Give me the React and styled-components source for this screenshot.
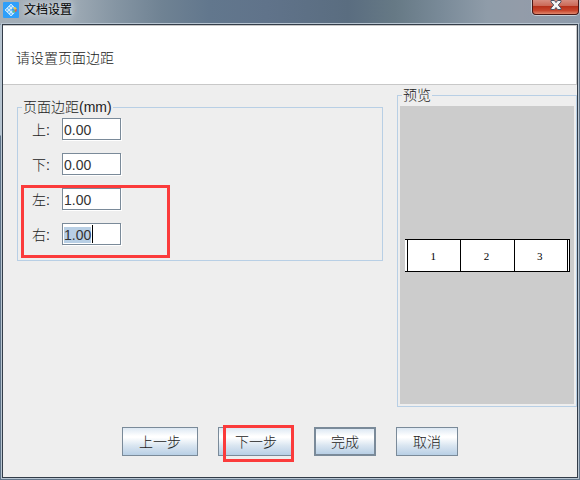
import React, { useEffect, useRef } from "react";
import styled, { createGlobalStyle } from "styled-components";

const margins = [
    { id: "top", label: "上:", value: "0.00" },
    { id: "bottom", label: "下:", value: "0.00" },
]
const sideMargins = [
    { id: "left", label: "左:", value: "1.00" },
    { id: "right", label: "右:", value: "1.00", active: true },
]

function MarginField({ id, label, value, active }) {
    const ref = useRef(null)
    useEffect(() => {
        if (active) {
            ref.current.focus()
            ref.current.select()
        }
    }, [active])
    return <Row>
        <RowLabel htmlFor={id}>{label}</RowLabel>
        <InputBox>
            <RowInput id={id} ref={ref} type="text" defaultValue={value} />
            {active && <Caret />}
        </InputBox>
    </Row>
}

function App() {
    return <>
        <GlobalStyle />
        <Window>
            <TitleBar>
                <Logo />
                <Title>文档设置</Title>
                <CloseBtn aria-label="关闭">
                    <svg width="12" height="11" viewBox="0 0 12 11">
                        <path
                            d="M1 .5h3.400L6 2.600 7.600 .5H11v1.400L8.300 5 11 8.200v1.300H7.600L6 7.500 4.400 9.500H1V8.200l2.700-3.200L1 1.900z"
                            fill="#f4f4f6"
                            stroke="#4b5266"
                            strokeWidth="1"
                        />
                    </svg>
                </CloseBtn>
            </TitleBar>
            <Content>
                <Banner>请设置页面边距</Banner>
                <Main>
                    <MarginGroup>
                        <Legend>页面边距(mm)</Legend>
                        <Rows>
                            {margins.map((m) => <MarginField key={m.id} {...m} />)}
                            <Marked>
                                {sideMargins.map((m) => <MarginField key={m.id} {...m} />)}
                                <RowsMark />
                            </Marked>
                        </Rows>
                    </MarginGroup>
                    <PreviewGroup>
                        <Legend>预览</Legend>
                        <PreviewArea>
                            <Strip>
                                <StripEdge />
                                <StripCell>1</StripCell>
                                <StripCell>2</StripCell>
                                <StripCell>3</StripCell>
                                <StripEdge $end />
                            </Strip>
                        </PreviewArea>
                    </PreviewGroup>
                </Main>
                <Footer>
                    <FooterBtn $wide>上一步</FooterBtn>
                    <BtnHolder>
                        <FooterBtn $wide>下一步</FooterBtn>
                        <BtnMark />
                    </BtnHolder>
                    <FooterBtn $default>完成</FooterBtn>
                    <FooterBtn>取消</FooterBtn>
                </Footer>
            </Content>
        </Window>
    </>
}

function Logo() {
    return <LogoSvg width="16" height="16" viewBox="0 0 16 16">
        <rect width="16" height="16" rx="1" fill="#2f9ffa" />
        <path d="M8 2 12 6 9 9 11.500 11 8.500 14 2 8z" fill="#7cc4fb" />
        <g fill="none" stroke="#dff2ff" strokeWidth="0.800">
            <path d="M8 2 12 6 8 10M8 2 2 8 8 14 11.500 10.500" />
            <path d="M6 4 10 8M4 6 10 12M10 4 4 10M8 10 6 12" />
        </g>
        <path d="M8.500 7.500 10 6 11.500 7.500 10 9.500z" fill="#2f9ffa" />
        <path d="M10.200 6.500 12 4.800 13.800 6.800 12 8z" fill="#f5c83a" />
        <path d="M11.500 8 14 7 13.500 9.500 12 10z" fill="#ea5a48" />
        <path d="M9.500 8.500 12 8.800 11.500 11 10 10.500z" fill="#6cc873" />
    </LogoSvg>
}

export default App

const GlobalStyle = createGlobalStyle`
    * {
        box-sizing: border-box;
    }
    body {
        margin: 0;
        font-family: "Liberation Sans", "Noto Sans CJK SC", sans-serif;
        font-size: 14px;
        font-weight: 300;
        line-height: 16px;
        color: #222;
    }
    button, input {
        font: inherit;
        color: inherit;
    }
`
const Window = styled.div`
    display: flex;
    flex-direction: column;
    min-height: 100vh;
    padding: 0 1px 1px;
    background:
        linear-gradient(to bottom, transparent 24px, #b5c3cf 25px, #b5c3cf 135px, #5f7388 136px) left / 2px 100% no-repeat,
        linear-gradient(to right, #a4aeb7 0%, #a0acb6 12%, #8595a3 20%, #6f8293 28%, #62778d 36%, #60738a 46%, #5a6d80 60%, #667985 68%, #798a98 76%, #8f9ca9 84%, #939ca9 90%, #8d9bab 100%) top / 100% 24px no-repeat,
        #64788c;
`
const TitleBar = styled.div`
    display: flex;
    align-items: flex-start;
    height: 23px;
    padding-left: 2px;
`
const LogoSvg = styled.svg`
    margin-top: 2px;
`
const Title = styled.span`
    flex: 1;
    padding: 2px 5px;
    font-size: 12px;
    font-weight: 400;
    color: #000;
    text-shadow: 0 0 6px #dfe5ea, 0 0 10px #dfe5ea;
`
const CloseBtn = styled.button`
    display: flex;
    justify-content: center;
    width: 47px;
    height: 15px;
    padding: 0;
    border: 1px solid #4a1714;
    border-top: 0;
    border-radius: 0 0 4px 4px;
    background: linear-gradient(#d78d80, #cb6a58 40%, #b5301a 45%, #c8452c 75%, #e0866c);
    box-shadow: 0 0 0 1px #c5ccd4;
`
const Content = styled.div`
    display: flex;
    flex: 1;
    flex-direction: column;
    margin: 1px;
    border: 1px solid #333d49;
    box-shadow: 0 0 0 1px #b9c6d2;
    background: #eee;
`
const Banner = styled.div`
    padding: 24px 13px 18px;
    border-top: 1px solid #c8c8c8;
    border-bottom: 1px solid #c8c8c8;
    border-right: 1px solid #c8c8c8;
    background: #fff;
`
const Main = styled.div`
    display: flex;
    flex: 1;
    gap: 14px;
    padding: 2px 0 0 14px;
`
const Group = styled.fieldset`
    min-width: 0;
    margin: 0;
    border: 1px solid #b8cfe5;
`
const MarginGroup = styled(Group)`
    flex: 1;
    align-self: flex-start;
    margin-top: 12px;
    padding: 3px 14px 15px;
`
const PreviewGroup = styled(Group)`
    display: flex;
    flex-direction: column;
    flex: 0 0 180px;
    padding: 3px 2px 2px;
`
const Legend = styled.legend`
    margin-left: -10px;
    padding: 0 1px;
    height: 16px;
    ${PreviewGroup} & {
        margin-left: 2px;
    }
`
const Rows = styled.div`
    display: flex;
    flex-direction: column;
    gap: 13px;
`
const Row = styled.div`
    display: flex;
    align-items: center;
`
const RowLabel = styled.label`
    width: 30px;
    padding-top: 2px;
`
const InputBox = styled.div`
    position: relative;
    display: flex;
`
const RowInput = styled.input`
    width: 59px;
    height: 22px;
    padding: 2px 1px 0;
    border: 1px solid #7a8a99;
    border-radius: 0;
    outline: none;
    background: #fff;
    box-shadow: 1px 1px 0 #fff;
    color: #333;
    line-height: 18px;
    &::selection {
        background: #b8cfe5;
        color: #333;
    }
`
const Caret = styled.span`
    position: absolute;
    top: 2px;
    left: 30px;
    width: 1px;
    height: 18px;
    background: #000;
`
const Marked = styled(Rows)`
    position: relative;
`
const RedMark = styled.span`
    position: absolute;
    border: 3px solid #fb3b3b;
    pointer-events: none;
`
const RowsMark = styled(RedMark)`
    top: -3px;
    bottom: -13px;
    left: -11px;
    width: 149px;
`
const BtnMark = styled(RedMark)`
    top: -2px;
    bottom: -6px;
    left: 5px;
    right: 0;
`
const PreviewArea = styled.div`
    display: flex;
    flex: 1;
    align-items: center;
    padding: 0 4px 0 5px;
    background: #ccc;
`
const Strip = styled.div`
    display: flex;
    flex: 1;
    height: 33px;
    border-top: 1px solid #000;
    border-bottom: 1px solid #000;
    background: #fff;
`
const StripEdge = styled.div`
    width: ${(p) => (p.$end ? "3px" : "2px")};
    border: solid #000;
    border-width: ${(p) => (p.$end ? "0 1px" : "0")};
`
const StripCell = styled.div`
    display: flex;
    flex: 1;
    align-items: center;
    justify-content: center;
    padding: 2px 2px 0 0;
    border-left: 1px solid #000;
    font-family: "Liberation Serif", serif;
    font-size: 11px;
    font-weight: 400;
    color: #000;
`
const Footer = styled.div`
    display: flex;
    justify-content: center;
    gap: 20px;
    padding: 20px 0 21px;
`
const BtnHolder = styled.div`
    position: relative;
    display: flex;
`
const FooterBtn = styled.button`
    width: ${(p) => (p.$wide ? "76px" : "62px")};
    height: 29px;
    padding: 0;
    border: ${(p) => (p.$default ? "2px" : "1px")} solid #7a8a99;
    border-radius: 0;
    background: linear-gradient(#dde8f3, #fff 30%, #fff 35%, #dae6f1 65%, #b8cfe5);
`
